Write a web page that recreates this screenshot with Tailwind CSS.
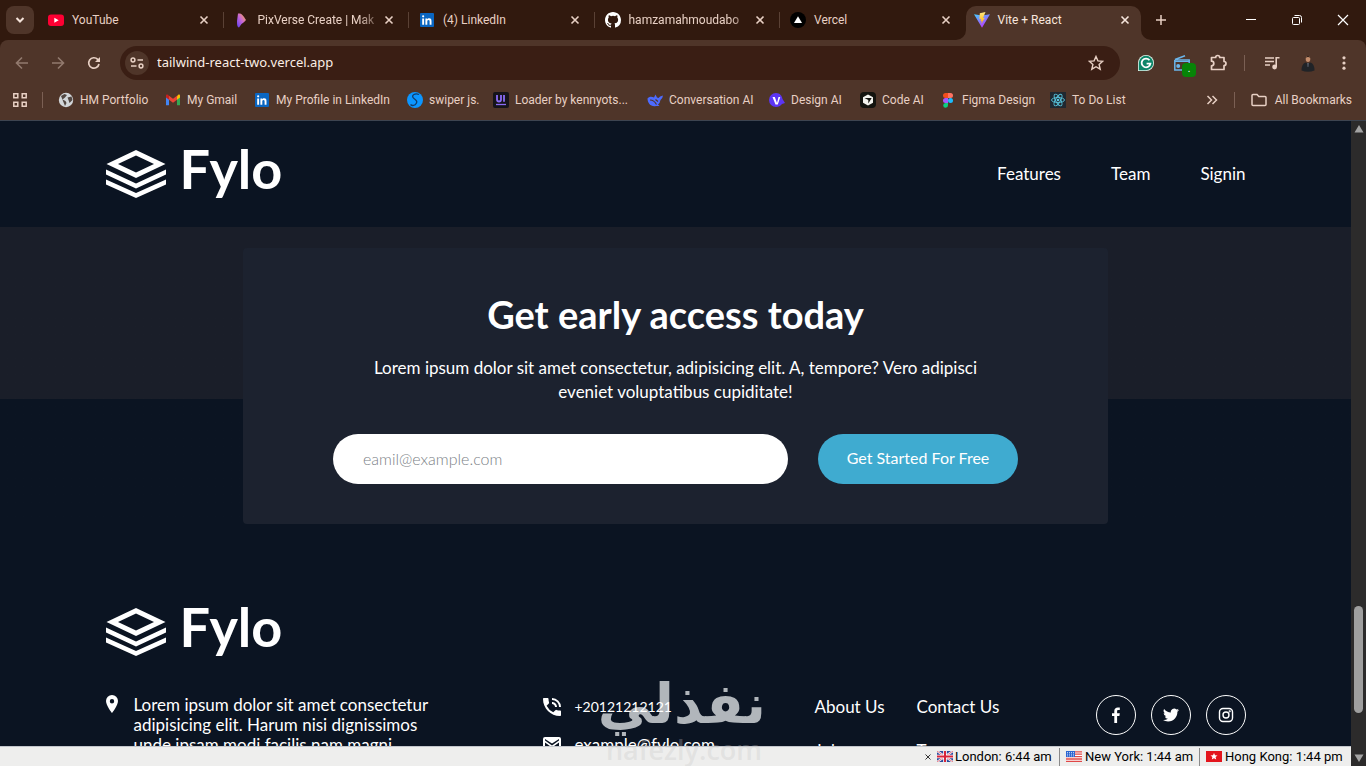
<!DOCTYPE html>
<html lang="en">
<head>
    <meta charset="UTF-8">
    <meta name="viewport" content="width=device-width, initial-scale=1.0">
    <title>Vite + React</title>

    <script src="https://cdn.jsdelivr.net/npm/@tailwindcss/browser@4"></script>
</head>

<body class="h-screen overflow-hidden flex flex-col bg-[#0b1422] font-['Roboto',sans-serif]">

    <!-- Shared symbols -->
    <svg class="hidden" xmlns="http://www.w3.org/2000/svg">
        <symbol id="close" viewBox="0 0 10 10"><path d="M1.5 1.5l7 7M8.5 1.5l-7 7" stroke="currentColor" stroke-width="1.6" fill="none"/></symbol>
        <symbol id="linkedin" viewBox="0 0 16 16">
            <rect x="1" y="1" width="14" height="14" rx="1" fill="#0a66c2"/>
            <path d="M3.2 6.4h1.9v6.3H3.2zM4.15 3.2a1.1 1.1 0 110 2.2 1.1 1.1 0 010-2.2zM6.4 6.4h1.8v.9c.3-.5.9-1 1.9-1 2 0 2.4 1.200 2.400 2.900v3.500h-1.900V9.600c0-.8 0-1.700-1.100-1.700s-1.200.8-1.200 1.600v3.200H6.400z" fill="#fff"/>
        </symbol>
        <symbol id="layers" viewBox="0 0 60 48">
            <path fill-rule="evenodd" fill="#fff" d="M30 0l29.500 14L30 28 .5 14zM30 5.500L12 14l18 8.500L48 14z"/>
            <path fill="#fff" d="M0 19.500l30 14 30-14v5L30 38.500 0 24.500z"/>
            <path fill="#fff" d="M0 29.500l30 13.500 30-13.500v5L30 48 0 34.500z"/>
        </symbol>
    </svg>

    <!-- Tab strip -->
    <div class="h-10 shrink-0 flex items-center bg-[#31190e] text-[#e8d0c4] text-xs">
        <button aria-label="Search tabs" class="ml-1.5 mr-1 size-7 shrink-0 rounded-lg bg-[#4f3529] flex items-center justify-center">
            <svg class="size-3" viewBox="0 0 12 12"><path d="M2.500 4L6 7.500 9.500 4" stroke="#f5e3da" stroke-width="2" fill="none"/></svg>
        </button>
        <div class="flex flex-1 max-w-[1105px] h-full">
            <div class="flex-1 min-w-0 flex items-center pl-2.5 relative">
                <svg class="size-4 shrink-0" viewBox="0 0 16 16"><rect y="2.500" width="16" height="11.500" rx="3" fill="#ff0033"/><path d="M6.300 5.700v5l4.400-2.500z" fill="#fff"/></svg>
                <span class="ml-2 flex-1 min-w-0 whitespace-nowrap">YouTube</span>
                <button aria-label="Close YouTube" class="mr-[15px]"><svg class="size-2.5"><use href="#close"/></svg></button>
                <span class="absolute right-0 h-4 w-px bg-[#5a4135]"></span>
            </div>
            <div class="flex-1 min-w-0 flex items-center pl-2.5 relative">
                <svg class="size-4 shrink-0" viewBox="0 0 16 16">
                    <defs><linearGradient id="pix" x1="0" y1="1" x2="1" y2="0"><stop offset="0" stop-color="#5b3df0"/><stop offset=".5" stop-color="#c767d8"/><stop offset="1" stop-color="#ffb03a"/></linearGradient></defs>
                    <path d="M4 1.500c3-.5 5 1 8 6.500-2 2.500-3 3-4.500 4l-2.500 3.500C3 15 3 12 3 9z" fill="url(#pix)"/>
                </svg>
                <span class="ml-2 flex-1 min-w-0 whitespace-nowrap mask-r-from-80%">PixVerse Create | Mak</span>
                <button aria-label="Close PixVerse" class="mr-[15px]"><svg class="size-2.5"><use href="#close"/></svg></button>
                <span class="absolute right-0 h-4 w-px bg-[#5a4135]"></span>
            </div>
            <div class="flex-1 min-w-0 flex items-center pl-2.5 relative">
                <svg class="size-4 shrink-0"><use href="#linkedin"/></svg>
                <span class="ml-2 flex-1 min-w-0 whitespace-nowrap">(4) LinkedIn</span>
                <button aria-label="Close LinkedIn" class="mr-[15px]"><svg class="size-2.5"><use href="#close"/></svg></button>
                <span class="absolute right-0 h-4 w-px bg-[#5a4135]"></span>
            </div>
            <div class="flex-1 min-w-0 flex items-center pl-2.5 relative">
                <svg class="size-4 shrink-0" viewBox="0 0 16 16"><path fill="#fff" d="M8 0C3.580 0 0 3.580 0 8c0 3.540 2.290 6.530 5.470 7.590.4.070.55-.17.55-.38 0-.19-.01-.82-.01-1.490-2.010.37-2.530-.49-2.690-.94-.09-.23-.48-.94-.82-1.130-.28-.15-.68-.52-.01-.53.63-.01 1.080.58 1.230.82.72 1.210 1.870.87 2.330.66.070-.52.28-.87.51-1.070-1.780-.2-3.640-.89-3.640-3.950 0-.87.31-1.590.82-2.150-.08-.2-.36-1.020.08-2.120 0 0 .67-.21 2.200.82a7.500 7.500 0 014 0c1.530-1.040 2.200-.82 2.200-.82.44 1.100.16 1.920.08 2.120.51.56.82 1.270.82 2.150 0 3.070-1.870 3.750-3.650 3.950.29.25.54.73.54 1.480 0 1.070-.01 1.930-.01 2.200 0 .21.15.46.55.38A8.010 8.010 0 0016 8c0-4.420-3.580-8-8-8z"/></svg>
                <span class="ml-2 flex-1 min-w-0 whitespace-nowrap mask-r-from-80%">hamzamahmoudabo</span>
                <button aria-label="Close GitHub" class="mr-[15px]"><svg class="size-2.5"><use href="#close"/></svg></button>
                <span class="absolute right-0 h-4 w-px bg-[#5a4135]"></span>
            </div>
            <div class="flex-1 min-w-0 flex items-center pl-2.5">
                <svg class="size-4 shrink-0" viewBox="0 0 16 16"><circle cx="8" cy="8" r="8" fill="#000"/><path d="M8 4.200l4 6.800H4z" fill="#fff"/></svg>
                <span class="ml-2 flex-1 min-w-0 whitespace-nowrap">Vercel</span>
                <button aria-label="Close Vercel" class="mr-[15px]"><svg class="size-2.5"><use href="#close"/></svg></button>
            </div>
            <div class="flex-1 min-w-0 pr-0.5 pt-1.5">
                <div class="h-full flex items-center pl-2 pb-1.5 relative rounded-t-[10px] bg-[#4f3529] text-[#f7e6dd]">
                    <svg class="absolute right-full bottom-0 size-2.5" viewBox="0 0 10 10"><path d="M10 0v10H0A10 10 0 0010 0z" fill="#4f3529"/></svg>
                    <svg class="absolute left-full bottom-0 size-2.5" viewBox="0 0 10 10"><path d="M0 0v10h10A10 10 0 010 0z" fill="#4f3529"/></svg>
                    <svg class="size-4 shrink-0" viewBox="0 0 16 16">
                        <defs>
                            <linearGradient id="va" x1="0" y1="0" x2=".6" y2="1"><stop offset="0" stop-color="#41d1ff"/><stop offset="1" stop-color="#bd34fe"/></linearGradient>
                            <linearGradient id="vb" x1="0" y1="0" x2="0" y2="1"><stop offset="0" stop-color="#ffea83"/><stop offset="1" stop-color="#ffa800"/></linearGradient>
                        </defs>
                        <path d="M0 2.200l8 13.500 8-13.500-8 1.400z" fill="url(#va)"/><path d="M11.500 0L5.800 1.200l-.4 6 1.700-.4-.5 2.400 1.200-.3-.5 3.200 3.500-6.300-1.800.3z" fill="url(#vb)"/>
                    </svg>
                    <span class="ml-2 flex-1 min-w-0 whitespace-nowrap">Vite + React</span>
                    <button aria-label="Close Vite + React" class="mr-[11px]"><svg class="size-2.5"><use href="#close"/></svg></button>
                </div>
            </div>
        </div>
        <button aria-label="New tab" class="ml-3 shrink-0"><svg class="size-3" viewBox="0 0 12 12"><path d="M6 1v10M1 6h10" stroke="#e8d0c4" stroke-width="1.500"/></svg></button>
        <div class="ml-auto flex shrink-0 text-white">
            <button aria-label="Minimize" class="w-[46px] flex justify-center"><svg class="size-3" viewBox="0 0 12 12"><path d="M1 5.500h10" stroke="currentColor"/></svg></button>
            <button aria-label="Restore" class="w-[46px] flex justify-center"><svg class="size-3" viewBox="0 0 12 12"><g fill="none" stroke="currentColor"><rect x="1.500" y="3.500" width="7" height="7" rx="1"/><path d="M3.500 1.500h5a2 2 0 012 2v5"/></g></svg></button>
            <button aria-label="Close window" class="w-[46px] flex justify-center"><svg class="size-3" viewBox="0 0 12 12"><path d="M1 1l10 10M11 1L1 11" stroke="currentColor" stroke-width="1.200"/></svg></button>
        </div>
    </div>

    <!-- Toolbar -->
    <div class="bg-[#31190e] shrink-0">
    <div class="h-[46px] flex items-center pl-1 pr-1 bg-[#4f3529] rounded-t-lg text-[#e8d0c4]">
        <button aria-label="Back" class="w-9 flex justify-center text-[#927a6e]"><svg class="size-4" viewBox="0 0 16 16"><path d="M14 8H3M8 2.500L2.500 8 8 13.500" stroke="currentColor" stroke-width="1.600" fill="none"/></svg></button>
        <button aria-label="Forward" class="w-9 flex justify-center text-[#927a6e]"><svg class="size-4" viewBox="0 0 16 16"><path d="M2 8h11M8 2.500L13.500 8 8 13.500" stroke="currentColor" stroke-width="1.600" fill="none"/></svg></button>
        <button aria-label="Reload" class="w-9 flex justify-center"><svg class="size-4" viewBox="0 0 16 16"><path d="M13 9a5.200 5.200 0 11-1.300-4.600L13 5.700" stroke="currentColor" stroke-width="1.700" fill="none"/><path d="M14 2v5H9z" fill="currentColor"/></svg></button>
        <div class="ml-2 mr-2 flex-1 h-[34px] rounded-full bg-[#3a1e14] flex items-center pl-[5px] pr-4">
            <button aria-label="Site information" class="size-6 rounded-full bg-[#4f3529] flex items-center justify-center">
                <svg class="size-4" viewBox="0 0 16 16" fill="none" stroke="currentColor" stroke-width="1.500"><circle cx="4" cy="5" r="1.900"/><path d="M8.500 5H14M2 11h5.500"/><circle cx="12" cy="11" r="1.900"/></svg>
            </button>
            <input aria-label="Address" value="tailwind-react-two.vercel.app" class="ml-2 flex-1 bg-transparent outline-none font-['Noto_Sans',sans-serif] text-[13px] text-[#fbeee6]">
            <button aria-label="Bookmark this tab"><svg class="size-4" viewBox="0 0 16 16"><path d="M8 1.500l1.900 4.400 4.800.4-3.600 3.200 1.100 4.700L8 11.700l-4.200 2.500 1.100-4.700L1.300 6.300l4.800-.4z" stroke="currentColor" stroke-width="1.400" fill="none"/></svg></button>
        </div>
        <button aria-label="Grammarly" class="w-9 flex justify-center"><svg class="size-4" viewBox="0 0 16 16"><path d="M8 0a8 8 0 110 16H0V8a8 8 0 018-8z" fill="#dff5ec"/><path d="M8 .8a7.200 7.200 0 110 14.400H.8V8A7.200 7.200 0 018 .8z" fill="#0c8568"/><path d="M11.500 5.200A4.400 4.400 0 1012.400 8.600H8.600" stroke="#fff" stroke-width="1.800" fill="none"/></svg></button>
        <button aria-label="Radio" class="w-9 flex justify-center relative">
            <svg class="size-4" viewBox="0 0 16 16"><path d="M1 4.500L11 .7M.8 5h14.400v3.500M.8 5v10h8" stroke="#6bb5ea" stroke-width="1.500" fill="none"/><path d="M1 6.500h14" stroke="#6bb5ea"/><circle cx="4.200" cy="11" r="2" fill="#6bb5ea"/></svg>
            <span class="absolute left-[18px] top-2 size-3.5 rounded-sm bg-[#078407] text-white text-[10px] leading-3">.</span>
        </button>
        <button aria-label="Extensions" class="w-9 flex justify-center"><svg class="size-[18px]" viewBox="0 0 18 18"><path d="M2.500 3.500h4.200a2 2 0 014 0H15v4a2 2 0 010 4v4H2.500v-3.700a2.300 2.300 0 000-4.600z" stroke="currentColor" stroke-width="1.700" stroke-linejoin="round" fill="none"/></svg></button>
        <span class="w-px h-4 ml-2 mr-[9px] bg-[#7b6054]"></span>
        <button aria-label="Media" class="w-9 flex justify-center"><svg class="size-4" viewBox="0 0 16 16"><path d="M1 3h9M1 6.500h9M1 10h5M12.200 12V2.800H15.500" stroke="currentColor" stroke-width="1.600" fill="none"/><circle cx="10.600" cy="12" r="2.400" fill="currentColor"/></svg></button>
        <button aria-label="Profile" class="w-9 flex justify-center"><svg class="size-[18px]" viewBox="0 0 18 18"><ellipse cx="9" cy="5" rx="2.300" ry="3" fill="#c48d6c"/><path d="M6.600 4Q9-.5 11.400 4 9 2 6.600 4z" fill="#33231d"/><path d="M2.500 16.500q0-6.500 4-8l2.500 1 2.500-1q4 1.500 4 8-6.500 2.500-13 0z" fill="#202327"/><path d="M8.200 9h1.600l-.4 4h-.8z" fill="#5c6370"/></svg></button>
        <button aria-label="Menu" class="w-9 flex justify-center"><svg class="size-4" viewBox="0 0 16 16" fill="currentColor"><circle cx="8" cy="2.800" r="1.600"/><circle cx="8" cy="8" r="1.600"/><circle cx="8" cy="13.200" r="1.600"/></svg></button>
    </div>
    </div>

    <!-- Bookmarks -->
    <nav class="h-[35px] pb-1.5 shrink-0 flex items-center bg-[#4f3529] border-b border-[#3d4450] text-[#e8d0c4] text-xs whitespace-nowrap">
        <button aria-label="Tab groups" class="ml-3 shrink-0"><svg class="size-4" viewBox="0 0 16 16" fill="none" stroke="currentColor" stroke-width="1.500"><path d="M1.800 1.800h4v4h-4zM10.200 1.800h4v4h-4zM1.800 10.200h4v4h-4zM10.200 10.200h4v4h-4z"/></svg></button>
        <span class="w-px h-4 ml-3.5 mr-[15px] bg-[#7b6054]"></span>
        <a href="#" class="w-[107px] flex items-center gap-1.5">
            <svg class="size-4 shrink-0" viewBox="0 0 16 16"><circle cx="8" cy="8" r="7.200" fill="#d2d6d9"/><path d="M3 4l3.500-2L9 3 7 5.500 4.500 7.500 7.500 9l1 2-1.500 3M9.500 5.500l4-1 1 3.500-3 3-1-3z" fill="#514742"/></svg>HM Portfolio</a>
        <a href="#" class="w-[89px] flex items-center gap-1.5">
            <svg class="size-4 shrink-0" viewBox="0 0 16 16"><path d="M1 4v9.300h3V7z" fill="#4285f4"/><path d="M12 7v6.300h3V4z" fill="#34a853"/><path d="M12 4.300V7.700l3-2.200V4c0-1.800-1.700-2-3 .3z" fill="#fbbc04"/><path d="M4 7.700V3.700l4 3 4-3v4l-4 3z" fill="#ea4335"/><path d="M1 4c0-1.800 1.700-2 3-.3v4L1 5.500z" fill="#c5221f"/></svg>My Gmail</a>
        <a href="#" class="w-[153px] flex items-center gap-1.5">
            <svg class="size-4 shrink-0"><use href="#linkedin"/></svg>My Profile in LinkedIn</a>
        <a href="#" class="w-[86px] flex items-center gap-1.5">
            <svg class="size-4 shrink-0" viewBox="0 0 16 16"><circle cx="8" cy="8" r="8" fill="#0c96ff"/><path d="M12 2.500C8 1 4.500 3 6 5.500S11 8 9.500 11 5 14 3.500 12.500" stroke="#123d6b" stroke-width="1.300" fill="none"/></svg>swiper js.</a>
        <a href="#" class="w-[154px] flex items-center gap-1.5">
            <svg class="size-4 shrink-0" viewBox="0 0 16 16"><rect width="16" height="16" rx="2" fill="#15141a"/><path d="M4 3v4.500q0 2 2 2t2-2V3M11 3v6.800" stroke="#8b6cf5" stroke-width="1.800" fill="none"/><path d="M3 12.500h10" stroke="#8b6cf5" stroke-width="1.300"/></svg>Loader by kennyots...</a>
        <a href="#" class="w-[122px] flex items-center gap-1.5">
            <svg class="size-4 shrink-0" viewBox="0 0 16 16"><path d="M.5 6.500C2 4.500 4.500 4.300 7 5.500L8.500 2.500 10 5.500l1.500.5q1-2 4.500-2.500-.5 3.500-2.500 4.500-.5 3-2.500 4.500l1.500 1.500H9C4 15 .5 11.500.5 6.500z" fill="#4d6bfe"/><path d="M3 8q4 0 6.500 4.500M8.500 7.500l2.500 2" stroke="#4f3529" stroke-width="1.200" fill="none"/></svg>Conversation AI</a>
        <a href="#" class="w-[91px] flex items-center gap-1.5">
            <svg class="size-4 shrink-0" viewBox="0 0 16 16"><path d="M7 1c4 0 6 3 6.500 6l2.500 4-3 1c-1.500 2-3.500 3-6 3a7 7 0 010-14z" fill="#5c35f5"/><path d="M3.500 5h2.300L8 11l1.500-6h1.800L8.800 12.500H6.500z" fill="#fff"/></svg>Design AI</a>
        <a href="#" class="w-20 flex items-center gap-1.5">
            <svg class="size-4 shrink-0" viewBox="0 0 16 16"><rect width="16" height="16" rx="4" fill="#14140f"/><path d="M8 2.500l5 2.800v5.400l-5 2.800-5-2.800V5.300z" fill="#f3f3ee"/><path d="M4.500 6h7.200L8.300 11.500V8z" fill="#14140f"/></svg>Code AI</a>
        <a href="#" class="w-[110px] flex items-center gap-1.5">
            <svg class="size-4 shrink-0" viewBox="0 0 16 16"><path d="M5.500 1H8v5H5.500a2.500 2.500 0 010-5z" fill="#f24e1e"/><path d="M8 1h2.500a2.500 2.500 0 010 5H8z" fill="#ff7262"/><path d="M5.500 6H8v5H5.500a2.500 2.500 0 010-5z" fill="#a259ff"/><circle cx="10.500" cy="8.500" r="2.500" fill="#1abcfe"/><path d="M5.500 11H8v2.300A2.400 2.400 0 115.500 11z" fill="#0acf83"/></svg>Figma Design</a>
        <a href="#" class="flex items-center gap-1.5">
            <svg class="size-4 shrink-0" viewBox="0 0 16 16"><rect width="16" height="16" fill="#202830"/><g fill="none" stroke="#58c4dc" stroke-width=".9"><ellipse cx="8" cy="8" rx="6.500" ry="2.500"/><ellipse cx="8" cy="8" rx="6.500" ry="2.500" transform="rotate(60 8 8)"/><ellipse cx="8" cy="8" rx="6.500" ry="2.500" transform="rotate(120 8 8)"/></g><circle cx="8" cy="8" r="1.300" fill="#58c4dc"/></svg>To Do List</a>
        <button aria-label="More bookmarks" class="ml-auto"><svg class="size-3" viewBox="0 0 12 12"><path d="M1.500 2l4 4-4 4M6.500 2l4 4-4 4" stroke="currentColor" stroke-width="1.500" fill="none"/></svg></button>
        <span class="w-px h-4 ml-4 mr-4 bg-[#7b6054]"></span>
        <a href="#" class="flex items-center gap-2 pr-3.5">
            <svg class="size-4" viewBox="0 0 16 16"><path d="M1 3.500q0-1 1-1h4l1.800 2H14q1 0 1 1v7q0 1-1 1H2q-1 0-1-1z" stroke="currentColor" stroke-width="1.500" fill="none"/></svg>All Bookmarks</a>
    </nav>

    <!-- Viewport -->
    <div class="flex-1 min-h-0 flex">
        <div class="flex-1 min-w-0 flex flex-col relative">
            <main class="flex-1 min-h-0 overflow-hidden text-white font-['Lato',sans-serif] text-[17px] leading-6">
                <header class="bg-[#0b1422]">
                    <div class="h-[106px] max-w-[1140px] mx-auto flex items-center justify-between">
                        <a href="#" class="flex items-center gap-3.5">
                            <svg class="w-[60px] h-12"><use href="#layers"/></svg>
                            <span class="text-[54px] leading-11 font-bold pb-2.5">Fylo</span>
                        </a>
                        <nav class="flex gap-[50px]">
                            <a href="#">Features</a>
                            <a href="#">Team</a>
                            <a href="#">Signin</a>
                        </nav>
                    </div>
                </header>

                <section class="bg-linear-to-b from-[#1a1e29] from-[172px] to-[#0b1422] to-[172px] pt-[21px]">
                    <div class="w-[64%] h-[276px] mx-auto rounded bg-[#1c222f] pt-[42px] text-center">
                        <h1 class="text-[38px] leading-12 font-bold">Get early access today</h1>
                        <p class="mt-[18px] mx-auto max-w-[640px]">Lorem ipsum dolor sit amet consectetur, adipisicing elit. A, tempore? Vero adipisci<br>eveniet voluptatibus cupiditate!</p>
                        <form class="mt-[30px] flex justify-center gap-[30px]">
                            <input type="email" aria-label="Email" placeholder="eamil@example.com" class="w-[455px] h-[50px] rounded-full bg-white px-[30px] pb-0.5 text-base font-light placeholder:text-[#7b7f86]">
                            <button type="button" class="w-[200px] h-[50px] rounded-full bg-[#3fabd0] pb-0.5 text-base">Get Started For Free</button>
                        </form>
                    </div>
                </section>

                <footer class="max-w-[1140px] mx-auto pt-[81px]">
                    <a href="#" class="flex items-center gap-3.5">
                        <svg class="w-[60px] h-12"><use href="#layers"/></svg>
                        <span class="text-[54px] leading-11 font-bold pb-2.5">Fylo</span>
                    </a>
                    <div class="mt-9 grid grid-cols-[437fr_272fr_281fr_150fr]">
                        <div class="flex gap-4">
                            <svg class="w-3 h-[18px] shrink-0" viewBox="0 0 12 18"><path fill="#fff" fill-rule="evenodd" d="M6 0a6 6 0 016 6c0 4.500-6 12-6 12S0 10.500 0 6a6 6 0 016-6zm0 4a2.200 2.200 0 100 4.400A2.200 2.200 0 006 4z"/></svg>
                            <p class="leading-5 whitespace-nowrap">Lorem ipsum dolor sit amet consectetur<br>adipisicing elit. Harum nisi dignissimos<br>unde ipsam modi facilis nam magni</p>
                        </div>
                        <div class="flex flex-col gap-3.5 relative z-10">
                            <a href="#" class="flex items-center gap-3.5 text-sm leading-6">
                                <svg class="size-[18px]" viewBox="3 3 18 18" fill="#fff"><path d="M20 15.500c-1.250 0-2.450-.2-3.570-.57a1.020 1.020 0 00-1.020.24l-2.200 2.200a15.050 15.050 0 01-6.590-6.590l2.200-2.210c.28-.26.36-.65.25-1C8.700 6.450 8.500 5.250 8.500 4c0-.55-.45-1-1-1H4c-.55 0-1 .45-1 1 0 9.390 7.610 17 17 17 .55 0 1-.45 1-1v-3.500c0-.55-.45-1-1-1zM19 12h2a9 9 0 00-9-9v2c3.870 0 7 3.130 7 7zm-4 0h2c0-2.760-2.240-5-5-5v2c1.660 0 3 1.340 3 3z"/></svg>
                                +20121212121</a>
                            <a href="#" class="flex items-center gap-3.5">
                                <svg class="w-[18px] h-4" viewBox="0 0 18 16"><path fill="#fff" fill-rule="evenodd" d="M2 0h14q2 0 2 2v12q0 2-2 2H2q-2 0-2-2V2q0-2 2-2zm0 2v1.500l7 5 7-5V2l-7 4.500zM2 5.500V14h14V5.500l-7 5z"/></svg>
                                example@fylo.com</a>
                        </div>
                        <div class="grid grid-cols-[102px_1fr] gap-y-5 content-start">
                            <a href="#">About Us</a>
                            <a href="#">Contact Us</a>
                            <a href="#">Jobs</a>
                            <a href="#">Terms</a>
                        </div>
                        <div class="flex gap-[15px] justify-end">
                            <a href="#" aria-label="Facebook" class="size-10 rounded-full border border-white flex items-center justify-center"><svg class="size-4" viewBox="0 0 16 16"><path fill="#fff" d="M6.300 16V9H4V6.200h2.300V4.100C6.300 1.700 7.700.5 9.800.5c1 0 1.800.1 2 .1v2.500h-1.300c-1.100 0-1.400.5-1.400 1.300v1.800h2.700L11.400 9H9.100v7z"/></svg></a>
                            <a href="#" aria-label="Twitter" class="size-10 rounded-full border border-white flex items-center justify-center"><svg class="size-4" viewBox="0 0 16 16"><path fill="#fff" d="M5.030 14.500c6.040 0 9.340-5 9.340-9.330 0-.14 0-.28-.01-.42A6.700 6.700 0 0016 3.050a6.600 6.600 0 01-1.890.52 3.300 3.300 0 001.450-1.820 6.600 6.600 0 01-2.090.8 3.290 3.290 0 00-5.600 3A9.320 9.320 0 011.110 2.100a3.290 3.290 0 001.020 4.380 3.300 3.300 0 01-1.490-.41v.04a3.280 3.280 0 002.630 3.220 3.200 3.200 0 01-1.480.06 3.280 3.280 0 003.070 2.280A6.590 6.590 0 010 13.030a9.300 9.300 0 005.030 1.470z"/></svg></a>
                            <a href="#" aria-label="Instagram" class="size-10 rounded-full border border-white flex items-center justify-center"><svg class="size-4" viewBox="0 0 16 16" fill="none" stroke="#fff" stroke-width="1.400"><rect x="1.500" y="1.500" width="13" height="13" rx="3.500"/><circle cx="8" cy="8" r="3"/><circle cx="11.700" cy="4.300" r=".4"/></svg></a>
                        </div>
                    </div>
                </footer>
            </main>

            <!-- World clocks -->
            <div class="h-5 shrink-0 flex items-center justify-end bg-[#eeeeed] border-t border-[#c3c6cc] text-black text-[13px] leading-4 whitespace-nowrap pr-[5px]">
                <button aria-label="Close clocks" class="mr-1.5"><svg class="size-1.5" viewBox="0 0 6 6"><path d="M.5.5l5 5M5.500.5l-5 5" stroke="#333"/></svg></button>
                <svg class="w-4 h-[11px]" viewBox="0 0 16 11"><path fill="#2b4a9b" d="M0 0h16v11H0z"/><path d="M0 0l16 11M16 0L0 11" stroke="#fff" stroke-width="2.200"/><path d="M0 0l16 11M16 0L0 11" stroke="#d8364a" stroke-width=".7"/><path d="M8 0v11M0 5.500h16" stroke="#fff" stroke-width="3.600"/><path d="M8 0v11M0 5.500h16" stroke="#d8243a" stroke-width="2"/></svg>
                <span class="ml-0.5 w-[98px]">London: 6:44 am</span>
                <span class="w-px h-[18px] ml-1.5 mr-1.5 bg-[#8a8a8a]"></span>
                <svg class="w-4 h-[11px]" viewBox="0 0 16 11"><path fill="#fff" d="M0 0h16v11H0z"/><path d="M0 .8h16M0 3.200h16M0 5.600h16M0 8h16M0 10.400h16" stroke="#e04848" stroke-width="1.300"/><path fill="#2d66d2" d="M0 0h9v6H0z"/><path d="M1 1.500h7M1 3.200h7M1 4.900h7" stroke="#fff" stroke-width=".7" stroke-dasharray="1 1"/></svg>
                <span class="ml-[3px] w-[108px]">New York: 1:44 am</span>
                <span class="w-px h-[18px] ml-1.5 mr-1.5 bg-[#8a8a8a]"></span>
                <svg class="w-4 h-[11px]" viewBox="0 0 16 11"><path fill="#e3151d" d="M0 0h16v11H0z"/><path d="M8 2l1 2.300 2.500.2-1.900 1.600.6 2.500L8 7.300 5.800 8.600l.6-2.500-1.900-1.600L7 4.300z" fill="#fff"/></svg>
                <span class="ml-[3px] w-[121px]">Hong Kong: 1:44 pm</span>
            </div>

            <!-- Watermark -->
            <div class="absolute bottom-0 left-[602px] w-[164px] pointer-events-none text-center whitespace-nowrap font-['DejaVu_Sans',sans-serif] font-bold">
                <div lang="ar" dir="rtl" class="text-[55px] leading-[60px] text-[#b1b6bb]">نفذلي</div>
                <div class="font-['Open_Sans',sans-serif] font-semibold text-[27px] leading-8 text-[#c4c4c4]/30">nafezly.com</div>
            </div>
        </div>

        <!-- Scrollbar -->
        <div class="w-[15px] shrink-0 bg-[#2c2b2b] flex flex-col items-center justify-between py-1">
            <svg class="w-2.5 h-2" viewBox="0 0 10 8"><path d="M5 0l4.500 7.500h-9z" fill="#a3a3a3"/></svg>
            <div class="mt-auto mb-[41px] w-[9px] h-[107px] rounded-full bg-[#9f9f9f]"></div>
            <svg class="w-2.5 h-2" viewBox="0 0 10 8"><path d="M5 8L.5.5h9z" fill="#a3a3a3"/></svg>
        </div>
    </div>
</body>

</html>
